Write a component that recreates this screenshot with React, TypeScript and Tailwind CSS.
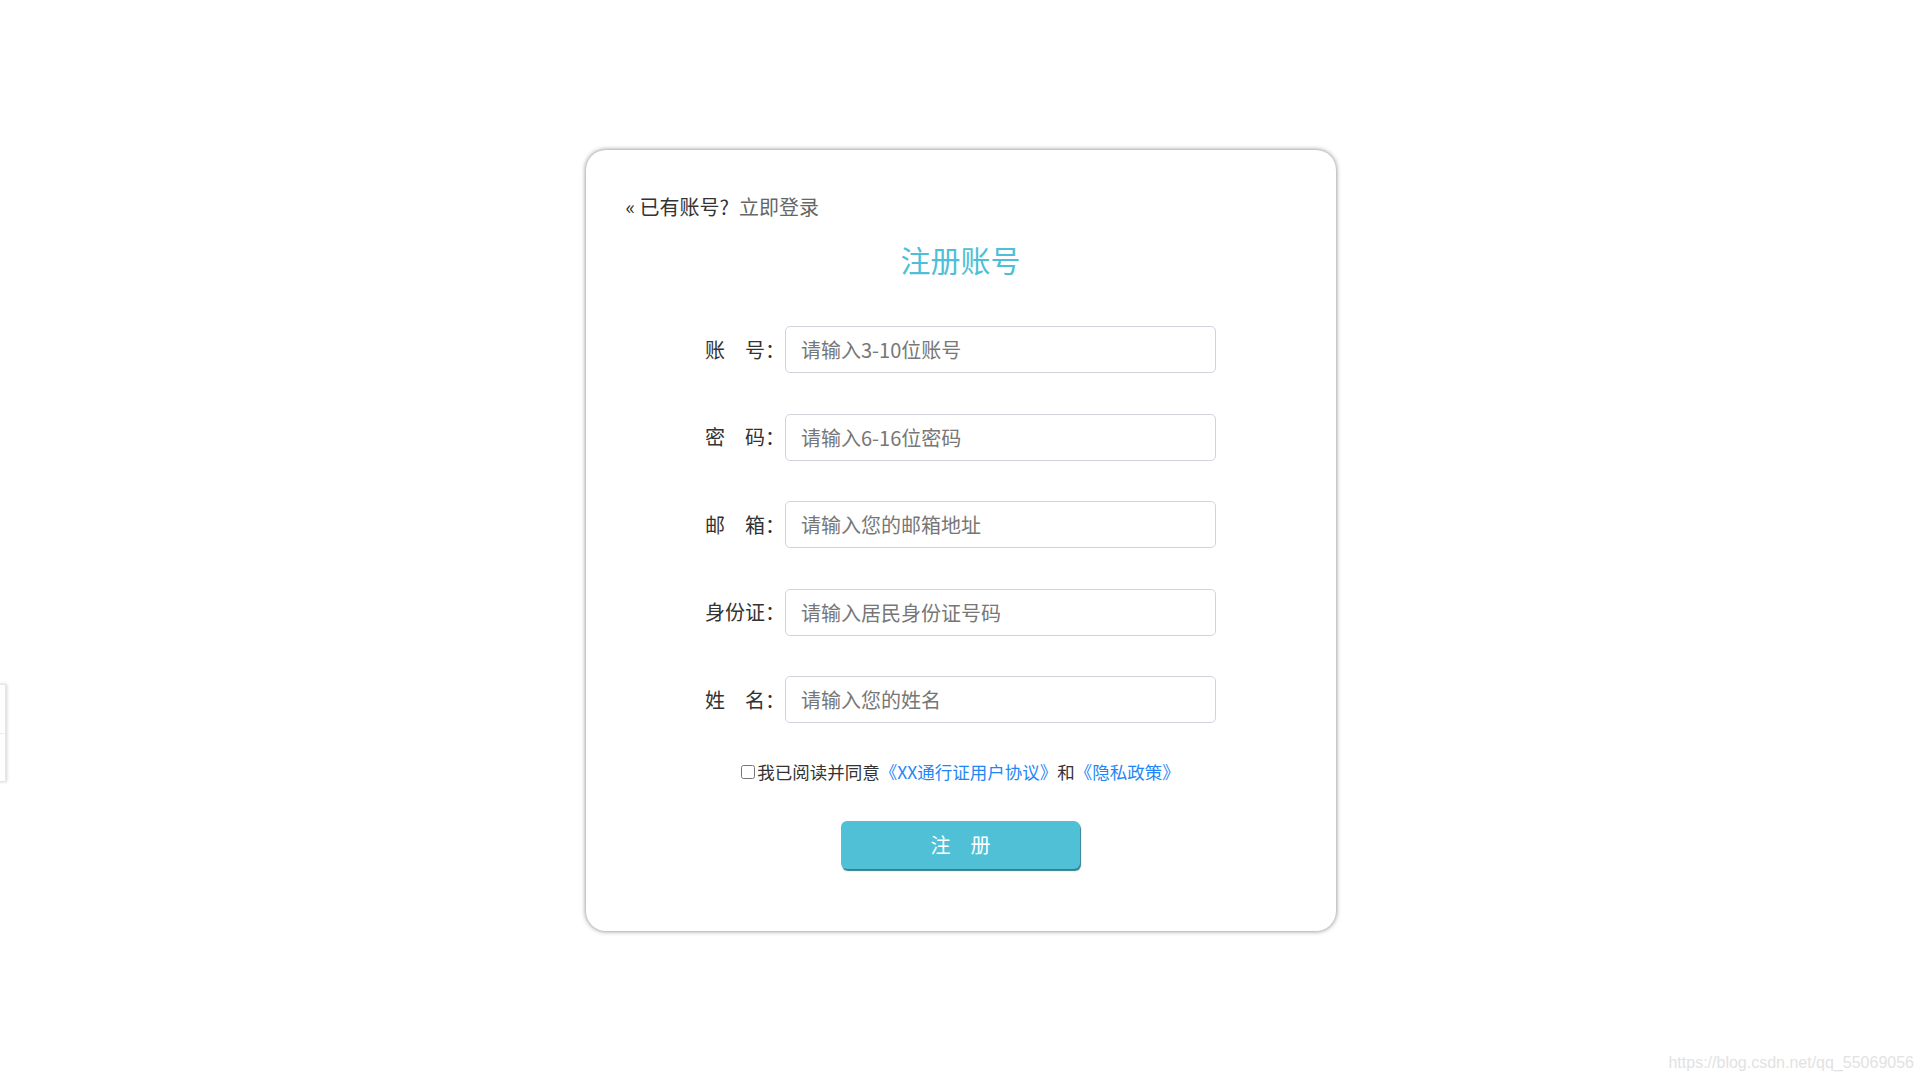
import React from "react";

const rows = [
  { label: "账　号：", placeholder: "请输入3-10位账号" },
  { label: "密　码：", placeholder: "请输入6-16位密码" },
  { label: "邮　箱：", placeholder: "请输入您的邮箱地址" },
  { label: "身份证：", placeholder: "请输入居民身份证号码" },
  { label: "姓　名：", placeholder: "请输入您的姓名" },
];

export default function App() {
  return (
    <div className="relative min-h-screen w-full bg-white font-['Noto_Sans_CJK_SC','Microsoft_YaHei',sans-serif] overflow-hidden">
      {/* left floating tab (mostly off-screen) */}
      <div className="absolute left-[-40px] top-[684px] w-[46px] h-[98px] bg-white border border-[#e6e6e6] shadow-[1px_0_3px_#d5d5d5] flex flex-col">
        <div className="flex-1 border-b border-[#eeeeee]" />
        <div className="flex-1" />
      </div>

      <div className="pt-[150px] pl-[1px] flex justify-center">
        <div className="w-[750px] h-[781px] rounded-[20px] bg-white shadow-[0_0_5px_#7a7a7a] pt-[43px] px-[40px]">
          <div className="text-[20px] leading-[28px] text-[#333333]">
            « 已有账号?<span className="ml-[10px] text-[#666666]">立即登录</span>
          </div>
          <div className="mt-[18px] text-center text-[30px] leading-[40px] text-[#4ebfd6]">注册账号</div>

          <div className="mt-[47px] flex flex-col items-center gap-[40.5px]">
            {rows.map((r) => (
              <div key={r.label} className="flex items-center">
                <span className="w-[80px] whitespace-nowrap text-[20px] text-[#333333]">{r.label}</span>
                <input
                  type="text"
                  placeholder={r.placeholder}
                  className="w-[431px] h-[47px] rounded-[5px] border border-[#d0d4da] px-[15px] text-[20px] text-[#333333] outline-none placeholder:text-[#777777]"
                />
              </div>
            ))}
          </div>

          <div className="mt-[36px] flex items-center justify-center text-[17.5px] leading-[26px] text-[#333333]">
            <input type="checkbox" className="m-0 mr-[2px] w-[14px] h-[14px]" />
            <span>我已阅读并同意</span>
            <span className="text-[#1f87f5]">《XX通行证用户协议》</span>
            <span>和</span>
            <span className="text-[#1f87f5]">《隐私政策》</span>
          </div>

          <button className="mt-[36px] mx-auto block w-[239px] h-[48px] rounded-[6px] bg-[#4fc0d6] text-white text-[20px] shadow-[1px_2px_1px_#2f7f8f]">
            注　册
          </button>
        </div>
      </div>

      <div className="absolute right-[6px] bottom-[7px] text-[16px] leading-[20px] text-[#e2e2e2] font-['Liberation_Sans',sans-serif]">
        https://blog.csdn.net/qq_55069056
      </div>
    </div>
  );
}
